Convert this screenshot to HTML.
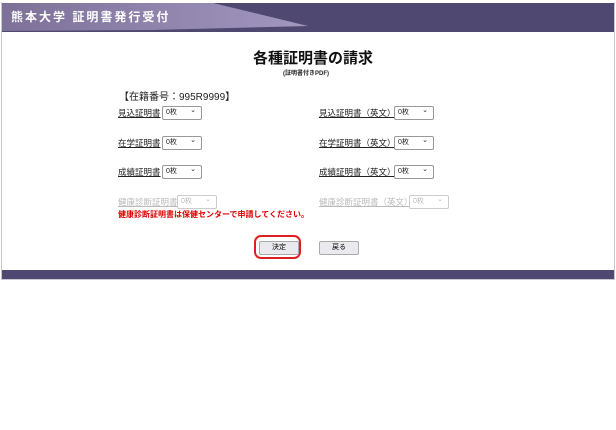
<!DOCTYPE html>
<html><head><meta charset="utf-8"><style>
body{margin:0;width:616px;height:430px;background:#fff;font-family:"Liberation Sans","Noto Sans CJK JP",sans-serif;position:relative;overflow:hidden}
.frame{position:absolute;left:1px;top:2px;width:612px;height:277px;border:1px solid #c8c8d0;border-top:none}
.hdr{position:absolute;left:2px;top:3px;width:612px;height:29px;background:#4f4870}
.wedge{position:absolute;left:0;top:0;width:612px;height:29px;background:linear-gradient(90deg,#7d7198 0%,#9a8fb8 40%,#c9c2da 100%);clip-path:polygon(0 0,211px 0,306px 23px,150px 27px,0 28px)}
.ttl{position:absolute;left:9px;top:6px;color:#fff;font-size:12px;line-height:16px;font-weight:bold;letter-spacing:2px}
.foot{position:absolute;left:2px;top:270px;width:612px;height:9px;background:#4f4870}
.t{position:absolute;font-size:8.5px;line-height:14px;color:#222;white-space:nowrap}
.u{text-decoration:underline}
.sel{position:absolute;border:1px solid #999;border-radius:2px;background:#fff;font-size:7px;line-height:12px;padding-left:3px;box-sizing:border-box;height:14px;color:#222}
.sel:after{content:"⌄";position:absolute;right:5px;top:-2px;font-size:7px;line-height:12px}
.dis{color:#bbb;border-color:#ccc}
.btn{position:absolute;top:241px;width:40px;height:14px;border:1px solid #aaa;border-radius:2px;background:#e9e9ee;font-size:7px;text-align:center;line-height:12px;box-sizing:border-box}
</style></head><body>
<div class="frame"></div>
<div class="hdr"><div class="wedge"></div><div class="ttl">熊本大学 証明書発行受付</div></div>
<div class="t" style="left:253px;top:49px;font-size:15px;line-height:20px;font-weight:bold;color:#111">各種証明書の請求</div>
<div class="t" style="left:283px;top:69px;font-size:6px;line-height:10px;font-weight:bold">(証明書付きPDF)</div>
<div class="t" style="left:119px;top:91px;font-size:10px;line-height:14px">【在籍番号：995R9999】</div>

<div class="t u" style="left:118px;top:106px">見込証明書</div><div class="sel" style="left:162px;top:106px;width:40px">0枚</div>
<div class="t u" style="left:319px;top:106px">見込証明書（英文）</div><div class="sel" style="left:394px;top:106px;width:40px">0枚</div>
<div class="t u" style="left:118px;top:136px">在学証明書</div><div class="sel" style="left:162px;top:136px;width:40px">0枚</div>
<div class="t u" style="left:319px;top:136px">在学証明書（英文）</div><div class="sel" style="left:394px;top:136px;width:40px">0枚</div>
<div class="t u" style="left:118px;top:165px">成績証明書</div><div class="sel" style="left:162px;top:165px;width:40px">0枚</div>
<div class="t u" style="left:319px;top:165px">成績証明書（英文）</div><div class="sel" style="left:394px;top:165px;width:40px">0枚</div>
<div class="t u" style="left:118px;top:195px;color:#bbb">健康診断証明書</div><div class="sel dis" style="left:177px;top:195px;width:40px">0枚</div>
<div class="t u" style="left:319px;top:195px;color:#bbb">健康診断証明書（英文）</div><div class="sel dis" style="left:409px;top:195px;width:40px">0枚</div>
<div class="t" style="left:118px;top:209px;color:#d00;font-weight:bold;font-size:8px;line-height:12px">健康診断証明書は保健センターで申請してください。</div>

<div style="position:absolute;left:254px;top:235px;width:47px;height:24px;border:2px solid #e02020;border-radius:7px;box-sizing:border-box"></div>
<div class="btn" style="left:259px">決定</div>
<div class="btn" style="left:319px">戻る</div>
<div class="foot"></div>
</body></html>
